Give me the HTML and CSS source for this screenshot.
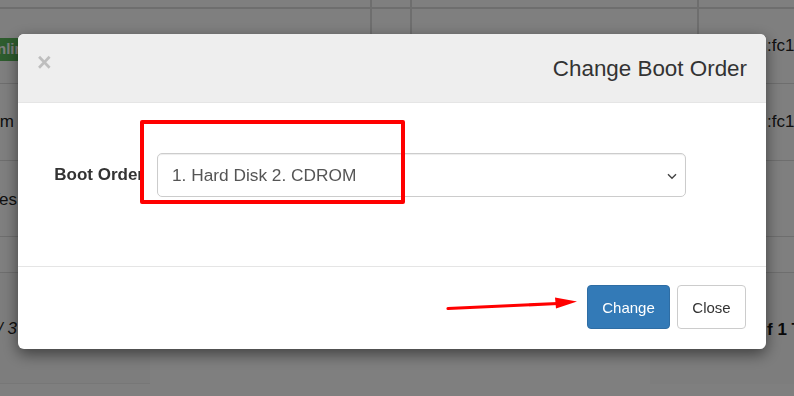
FILE: index.html
```html
<html lang="en">
  <head>
    <meta charset="utf-8" />
    <title>Change Boot Order</title>
    <link rel="stylesheet" href="styles.css">
  </head>
  <body>
    <div class="page">
      <div class="grid">
        <div class="row row-head">
          <div class="cell c1"></div><div class="cell c2"></div><div class="cell c3"></div><div class="cell c4"></div>
        </div>
        <div class="row row-a">
          <div class="cell c1"><div class="edge edge-wide"><span class="label-online">Online</span></div></div>
          <div class="cell c2"></div>
          <div class="cell c3"></div>
          <div class="cell c4"><span class="mac">:fc1a:2b</span></div>
        </div>
        <div class="row row-b">
          <div class="cell c1"><div class="edge edge-m">m</div></div>
          <div class="cell c2"></div>
          <div class="cell c3"></div>
          <div class="cell c4"><span class="mac">:fc1a:3c</span></div>
        </div>
        <div class="row row-c">
          <div class="cell c1"><div class="edge">Yes</div></div>
          <div class="cell c2"></div>
          <div class="cell c3"></div>
          <div class="cell c4"></div>
        </div>
        <div class="row row-d">
          <div class="cell c1"></div><div class="cell c2"></div><div class="cell c3"></div><div class="cell c4"></div>
        </div>
      </div>
      <div class="panels">
        <div class="panel panel-left"><div class="edge">1 / 3</div></div>
        <div class="panel panel-mid"></div>
        <div class="panel panel-right"><b>f 1 Total</b></div>
      </div>
    </div>

    <div class="backdrop"></div>

    <div class="modal-wrap">
      <div class="modal">
        <div class="modal-header">
          <span class="close">&times;</span>
          <h4 class="modal-title">Change Boot Order</h4>
        </div>
        <div class="modal-body">
          <div class="form-row">
            <label class="form-label">Boot Order</label>
            <div class="select">
              <span>1. Hard Disk 2. CDROM</span>
              <svg class="chevron" width="10" height="7" viewBox="0 0 10 7">
                <path d="M1 1.2 L5 5.2 L9 1.2" fill="none" stroke="#444" stroke-width="1.4"/>
              </svg>
            </div>
          </div>
          <div class="mark-box"></div>
        </div>
        <div class="modal-footer">
          <svg class="mark-arrow" width="140" height="20" viewBox="0 0 140 20">
            <path d="M2 13.5 L112 8.5" stroke="#f00" stroke-width="3.2" stroke-linecap="round" fill="none"/>
            <path d="M109 2.5 L131 6.5 L110 13.5 Z" fill="#f00"/>
          </svg>
          <button class="btn btn-primary">Change</button>
          <button class="btn btn-default">Close</button>
        </div>
      </div>
    </div>
  </body>
</html>
```

FILE: styles.css
```css
body,
html {
  margin: 0;
  padding: 0;
  width: 100%;
  height: 100%;
  overflow: hidden;
  background: #fff;
  font-family: "Liberation Sans", Arial, sans-serif;
  font-size: 17px;
  color: #333;
}

/* page behind the dialog */

.page {
  width: 794px;
}

.row {
  display: flex;
  border-bottom: 1px solid #ddd;
}

.row-head { height: 7px; border-bottom-width: 2px; }
.row-a { height: 74px; }
.row-b { height: 76px; }
.row-c { height: 75px; }
.row-d { height: 35px; }

.cell {
  display: flex;
  align-items: center;
  box-sizing: border-box;
  flex-shrink: 0;
  overflow: hidden;
}

.c1 { width: 372px; border-right: 2px solid #ddd; }
.c2 { width: 40px; border-right: 2px solid #ddd; }
.c3 { width: 287px; border-right: 2px solid #ddd; }
.c4 { width: 95px; padding-left: 68px; color: #222; white-space: nowrap; }

.edge {
  width: 17px;
  box-sizing: border-box;
  flex-shrink: 0;
  display: flex;
  justify-content: flex-end;
  overflow: hidden;
  white-space: nowrap;
  color: #222;
}

.edge-m {
  padding-right: 3px;
}

.edge-wide {
  width: 36px;
}

.row-a .edge { margin-top: 6px; }
.row-c .edge { margin-top: 2px; }

.label-online {
  display: inline-block;
  background: #5cb85c;
  color: #fff;
  font-weight: bold;
  font-size: 15px;
  padding: 4px 4px 5px 6px;
  line-height: 14px;
}

.panels {
  display: flex;
}

.panel {
  height: 111px;
  box-sizing: border-box;
  display: flex;
  align-items: center;
  flex-shrink: 0;
}

.panel-left {
  width: 150px;
  border-bottom: 1px solid #eee;
  background: #fafafa;
}

.panel-left .edge {
  font-style: italic;
  padding-top: 2px;
}

.panel-mid {
  width: 500px;
}

.panel-right {
  width: 144px;
  padding-left: 117px;
  padding-top: 2px;
  background: #fafafa;
  white-space: nowrap;
  overflow: hidden;
  color: #111;
}

/* dialog */

.backdrop {
  position: fixed;
  top: 0;
  right: 0;
  bottom: 0;
  left: 0;
  background: rgba(0, 0, 0, 0.5);
}

.modal-wrap {
  position: fixed;
  top: 0;
  left: 0;
  right: 0;
  bottom: 0;
  padding: 34px 0 0 18px;
}

.modal {
  position: relative;
  width: 748px;
  background: #fff;
  border-radius: 6px;
  box-shadow: 0 5px 15px rgba(0, 0, 0, 0.5);
  overflow: hidden;
}

.modal-header {
  height: 69px;
  box-sizing: border-box;
  display: flex;
  align-items: center;
  justify-content: space-between;
  padding: 0 19px 0 19px;
  background: #eee;
  border-bottom: 1px solid #e5e5e5;
}

.close {
  font-size: 25px;
  font-weight: bold;
  line-height: 1;
  color: #000;
  opacity: 0.2;
  margin-top: -11px;
}

.modal-title {
  margin: 0;
  font-size: 22.4px;
  font-weight: normal;
  color: #333;
  margin-top: 1px;
}

.modal-body {
  position: relative;
  height: 163px;
  box-sizing: border-box;
  padding-top: 50px;
}

.form-row {
  display: flex;
  align-items: center;
}

.form-label {
  width: 126px;
  text-align: right;
  font-weight: bold;
  font-size: 17px;
  color: #333;
  margin-right: 13px;
  white-space: nowrap;
}

.select {
  width: 529px;
  height: 44px;
  box-sizing: border-box;
  border: 1px solid #ccc;
  border-radius: 5px;
  display: flex;
  align-items: center;
  justify-content: space-between;
  padding: 0 8px 0 14px;
  color: #555;
  font-size: 17.3px;
  box-shadow: inset 0 1px 1px rgba(0, 0, 0, 0.075);
}

.chevron {
  margin-top: 2px;
}

.mark-box {
  position: absolute;
  left: 122px;
  top: 17px;
  width: 265px;
  height: 84px;
  box-sizing: border-box;
  border: 4px solid #f00;
  border-radius: 2px;
}

.modal-footer {
  position: relative;
  height: 83px;
  box-sizing: border-box;
  border-top: 1px solid #e5e5e5;
  display: flex;
  justify-content: flex-end;
  align-items: flex-start;
  gap: 7px;
  padding: 18px 20px 0 0;
}

.mark-arrow {
  position: absolute;
  left: 428px;
  top: 28px;
}

.btn {
  height: 44px;
  padding: 0;
  font-family: "Liberation Sans", Arial, sans-serif;
  font-size: 15px;
  border-radius: 4px;
  border: 1px solid #ccc;
  background: #fff;
  color: #333;
}

.btn-primary {
  width: 83px;
  background: #337ab7;
  border-color: #2e6da4;
  color: #fff;
}

.btn-default {
  width: 69px;
}
```
